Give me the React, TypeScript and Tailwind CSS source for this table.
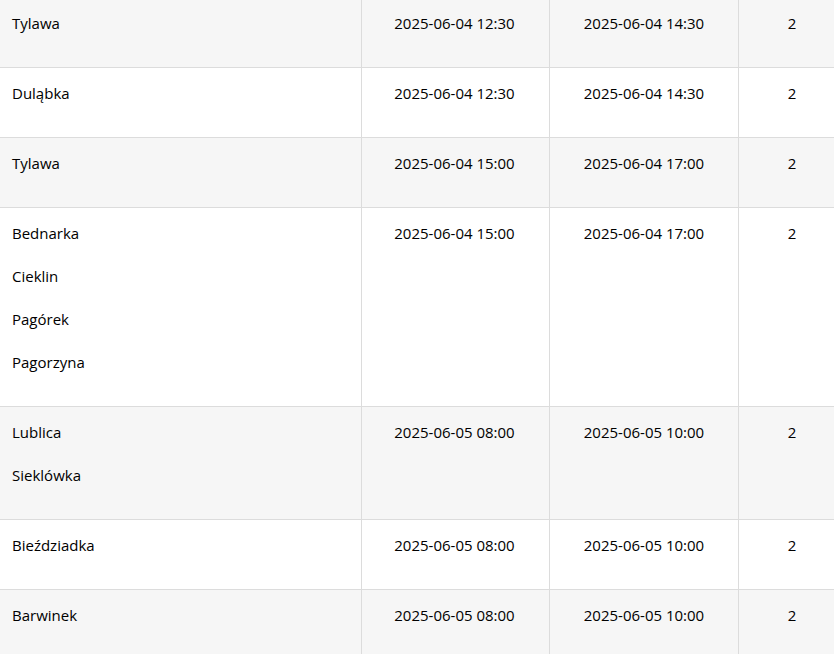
import React from "react";

type Row = { names: string[]; start: string; end: string; n: string };

const rows: Row[] = [
  { names: ["Tylawa"], start: "2025-06-04 12:30", end: "2025-06-04 14:30", n: "2" },
  { names: ["Duląbka"], start: "2025-06-04 12:30", end: "2025-06-04 14:30", n: "2" },
  { names: ["Tylawa"], start: "2025-06-04 15:00", end: "2025-06-04 17:00", n: "2" },
  { names: ["Bednarka", "Cieklin", "Pagórek", "Pagorzyna"], start: "2025-06-04 15:00", end: "2025-06-04 17:00", n: "2" },
  { names: ["Lublica", "Sieklówka"], start: "2025-06-05 08:00", end: "2025-06-05 10:00", n: "2" },
  { names: ["Bieździadka"], start: "2025-06-05 08:00", end: "2025-06-05 10:00", n: "2" },
  { names: ["Barwinek"], start: "2025-06-05 08:00", end: "2025-06-05 10:00", n: "2" },
];

export default function App() {
  return (
    <div
      className="w-[834px] h-[654px] overflow-hidden bg-white text-[15px] text-black"
      style={{ fontFamily: '"Open Sans", "Noto Sans", sans-serif' }}
    >
      <div className="-mt-[2px] w-[845px]">
        {rows.map((r, i) => (
          <div
            key={i}
            className={`grid grid-cols-[362px_188px_189px_106px] border-b border-[#dcdcdc] ${
              i % 2 === 0 ? "bg-[#f6f6f6]" : "bg-white"
            }`}
          >
            <div className="border-r border-[#dcdcdc] pl-[12px] pt-[12px] pb-[14px]">
              {r.names.map((n) => (
                <div key={n} className="leading-[26px] mb-[17px]">
                  {n}
                </div>
              ))}
            </div>
            <div className="border-r border-[#dcdcdc] pt-[12px] pb-[14px] pr-[2px] text-center leading-[26px]">{r.start}</div>
            <div className="border-r border-[#dcdcdc] pt-[12px] pb-[14px] text-center leading-[26px]">{r.end}</div>
            <div className="pt-[12px] pb-[14px] text-center leading-[26px]">{r.n}</div>
          </div>
        ))}
      </div>
    </div>
  );
}
